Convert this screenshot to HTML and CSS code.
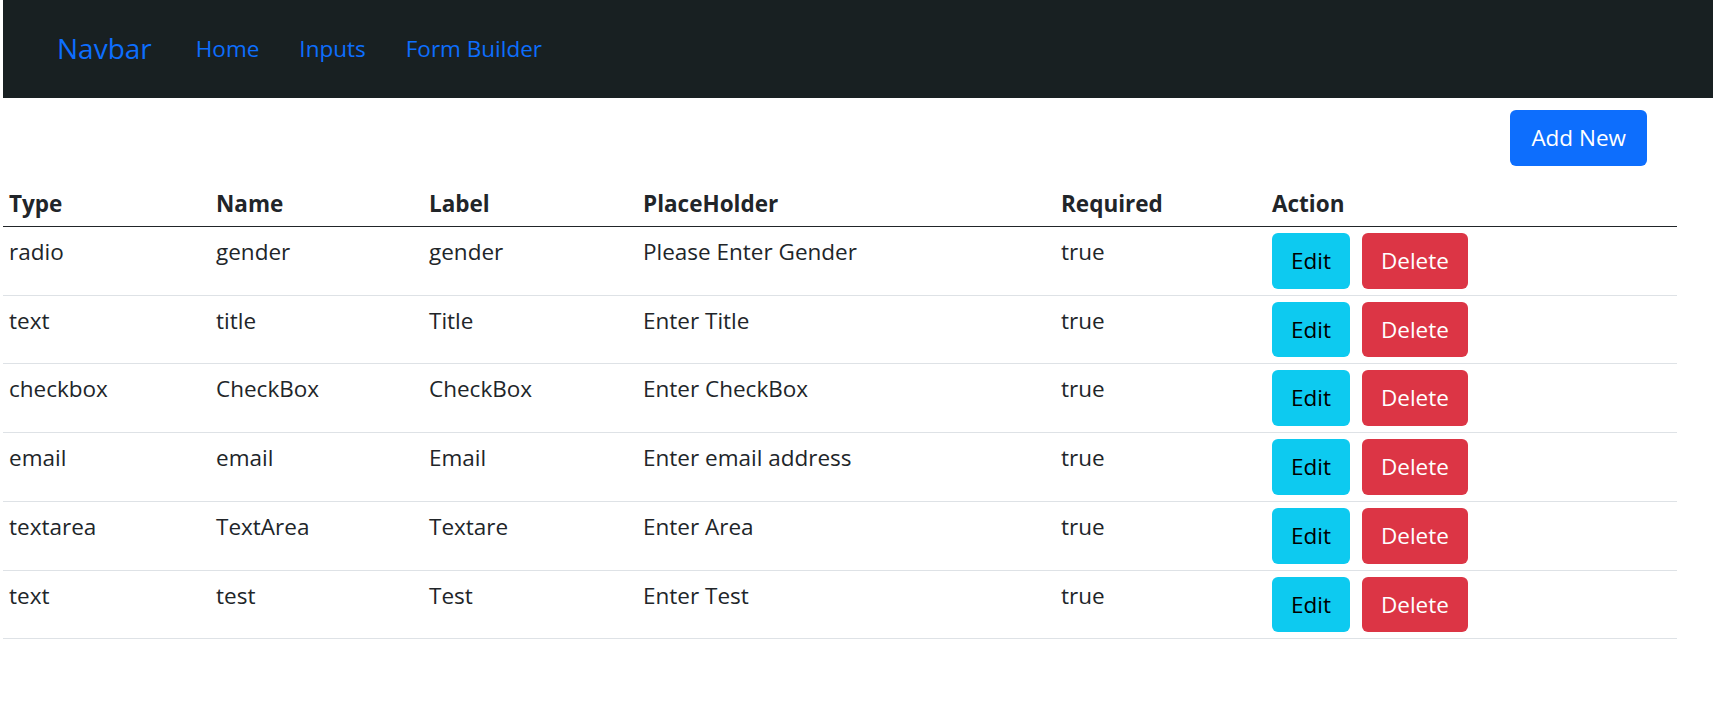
FILE: index.html
```html
<!DOCTYPE html>
<html lang="en">
<head>
<meta charset="utf-8">
<title>Form Builder</title>
<link rel="stylesheet" href="styles.css">
</head>
<body>
<nav class="navbar">
  <a class="brand" href="#">Navbar</a>
  <ul class="nav-links">
    <li><a href="#">Home</a></li>
    <li><a href="#">Inputs</a></li>
    <li><a href="#">Form Builder</a></li>
  </ul>
</nav>
<main class="page">
  <div class="toolbar">
    <button class="btn btn-primary">Add New</button>
  </div>
  <table class="table">
    <colgroup>
      <col class="c-type"><col class="c-name"><col class="c-label"><col class="c-ph"><col class="c-req"><col class="c-act">
    </colgroup>
    <thead>
      <tr><th>Type</th><th>Name</th><th>Label</th><th>PlaceHolder</th><th>Required</th><th>Action</th></tr>
    </thead>
    <tbody>
      <tr><td>radio</td><td>gender</td><td>gender</td><td>Please Enter Gender</td><td>true</td><td class="actions"><button class="btn btn-info">Edit</button><button class="btn btn-danger">Delete</button></td></tr>
      <tr><td>text</td><td>title</td><td>Title</td><td>Enter Title</td><td>true</td><td class="actions"><button class="btn btn-info">Edit</button><button class="btn btn-danger">Delete</button></td></tr>
      <tr><td>checkbox</td><td>CheckBox</td><td>CheckBox</td><td>Enter CheckBox</td><td>true</td><td class="actions"><button class="btn btn-info">Edit</button><button class="btn btn-danger">Delete</button></td></tr>
      <tr><td>email</td><td>email</td><td>Email</td><td>Enter email address</td><td>true</td><td class="actions"><button class="btn btn-info">Edit</button><button class="btn btn-danger">Delete</button></td></tr>
      <tr><td>textarea</td><td>TextArea</td><td>Textare</td><td>Enter Area</td><td>true</td><td class="actions"><button class="btn btn-info">Edit</button><button class="btn btn-danger">Delete</button></td></tr>
      <tr><td>text</td><td>test</td><td>Test</td><td>Enter Test</td><td>true</td><td class="actions"><button class="btn btn-info">Edit</button><button class="btn btn-danger">Delete</button></td></tr>
    </tbody>
  </table>
</main>
</body>
</html>
```

FILE: styles.css
```css
* { box-sizing: border-box; }

body {
  margin: 0;
  font-family: "Open Sans", "Noto Sans", "Liberation Sans", sans-serif;
  font-size: 22.5px;
  line-height: 1.5;
  color: #212529;
  background: #fff;
}

.navbar {
  margin-left: 3px;
  width: 1710px;
  height: 98px;
  background: #182022;
  display: flex;
  align-items: center;
  padding-left: 54px;
  gap: 44px;
}

.brand {
  color: #0d6efd;
  font-size: 28px;
  text-decoration: none;
  line-height: 1.5;
  margin-bottom: 2px;
}

.nav-links {
  list-style: none;
  margin: 0;
  padding: 0;
  display: flex;
  gap: 40px;
}

.nav-links a {
  color: #0d6efd;
  text-decoration: none;
  font-size: 22.5px;
}

.page {
  margin-left: 3px;
  width: 1674px;
}

.toolbar {
  display: flex;
  justify-content: flex-end;
  padding: 12px 30px 16px 0;
}

.btn {
  font-family: inherit;
  font-size: 22.5px;
  line-height: 1.5;
  padding: 10px 18px;
  border: 1px solid transparent;
  border-radius: 6px;
  cursor: pointer;
}

.btn-primary {
  background: #0d6efd;
  color: #fff;
  padding: 10px 20px;
}

.btn-info {
  background: #0dcaf0;
  color: #000;
}

.btn-danger {
  background: #dc3545;
  color: #fff;
  margin-left: 12px;
}

.table {
  width: 1674px;
  border-collapse: collapse;
  table-layout: fixed;
  line-height: 30px;
}

.c-type { width: 207px; }
.c-name { width: 213px; }
.c-label { width: 214px; }
.c-ph { width: 418px; }
.c-req { width: 211px; }
.c-act { width: 411px; }

.table th {
  text-align: left;
  font-weight: 700;
  padding: 7px 6px 7px;
  border-bottom: 1px solid #212529;
}

.table td {
  vertical-align: top;
  padding: 10px 6px 10px;
  border-bottom: 1px solid #dee2e6;
}

.table td.actions {
  padding: 6px 6px 6px;
  line-height: 1.5;
}
```
